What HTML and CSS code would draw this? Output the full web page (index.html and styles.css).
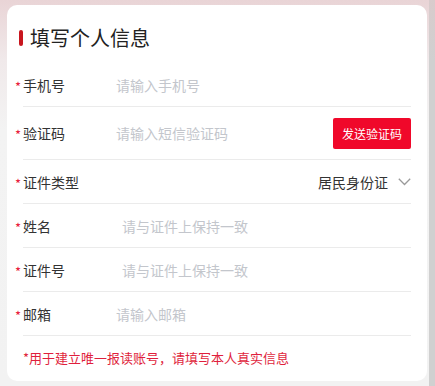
FILE: index.html
```html
<!DOCTYPE html>
<html lang="zh-CN">
<head>
<meta charset="utf-8">
<link rel="stylesheet" href="styles.css">
</head>
<body>
<div class="page">
  <div class="card">
    <h2 class="title"><span class="bar"></span>填写个人信息</h2>
    <div class="row">
      <span class="label req">手机号</span>
      <span class="ph">请输入手机号</span>
    </div>
    <div class="row row-code">
      <span class="label req">验证码</span>
      <span class="ph">请输入短信验证码</span>
      <button class="btn">发送验证码</button>
    </div>
    <div class="row">
      <span class="label req">证件类型</span>
      <span class="select">居民身份证
        <svg class="chev" width="13" height="8" viewBox="0 0 13 8"><path d="M0.8 0.8 L6.5 6.5 L12.2 0.8" fill="none" stroke="#9a9a9a" stroke-width="1.3"/></svg>
      </span>
    </div>
    <div class="row">
      <span class="label req">姓名</span>
      <span class="ph ph-wide">请与证件上保持一致</span>
    </div>
    <div class="row">
      <span class="label req">证件号</span>
      <span class="ph ph-wide">请与证件上保持一致</span>
    </div>
    <div class="row">
      <span class="label req">邮箱</span>
      <span class="ph">请输入邮箱</span>
    </div>
    <p class="note">*用于建立唯一报读账号，请填写本人真实信息</p>
  </div>
  <div class="scroll"></div>
</div>
</body>
</html>
```

FILE: styles.css
```css
* { box-sizing: border-box; }
html, body { margin: 0; padding: 0; }
body {
  width: 435px;
  height: 386px;
  overflow: hidden;
  font-family: "Noto Sans CJK SC", "Noto Sans", sans-serif;
  background: linear-gradient(#e9d4d6 0, #f0e9ea 60px, #f3f3f3 130px, #f2f2f2 100%);
}
.page {
  display: flex;
  height: 386px;
  padding: 5px 0 0 7px;
}
.card {
  width: 420px;
  height: 376px;
  background: #fff;
  border-radius: 10px;
  padding: 0 16px 14px 16px;
}
.scroll {
  margin-left: 2px;
  width: 6px;
  margin-top: -5px;
  height: 386px;
  background: linear-gradient(#d9cbcc 0, #d0d0d0 60px, #d0d0d0 100%);
}
.title {
  margin: 0 0 12px -4px;
  padding-top: 20px;
  display: flex;
  align-items: center;
  height: 46px;
  font-size: 20px;
  font-weight: 400;
  line-height: 26px;
  color: #222;
}
.bar {
  display: inline-block;
  width: 4px;
  height: 16px;
  border-radius: 2px;
  background: #c8161e;
  margin-right: 7px;
}
.row {
  display: flex;
  align-items: center;
  height: 44px;
  border-bottom: 1px solid #ebebeb;
  font-size: 14px;
}
.row-code { height: 53px; }
.label {
  position: relative;
  width: 93px;
  color: #333;
  flex: none;
}
.req::before {
  content: "*";
  position: absolute;
  left: -8px;
  top: 2px;
  color: #e8173a;
  font-size: 13px;
}
.ph {
  flex: 1;
  color: #c3c6cc;
}
.ph-wide { padding-left: 6px; }
.btn {
  flex: none;
  width: 78px;
  height: 31px;
  border: 0;
  border-radius: 2px;
  background: #f0082a;
  color: #fff;
  font-family: inherit;
  font-size: 12px;
  padding: 0;
}
.select {
  margin-left: auto;
  display: flex;
  align-items: center;
  color: #333;
}
.chev { margin-left: 10px; }
.note {
  margin: 0;
  padding-top: 12px;
  font-size: 13px;
  line-height: 20px;
  color: #e01f3d;
}
```
